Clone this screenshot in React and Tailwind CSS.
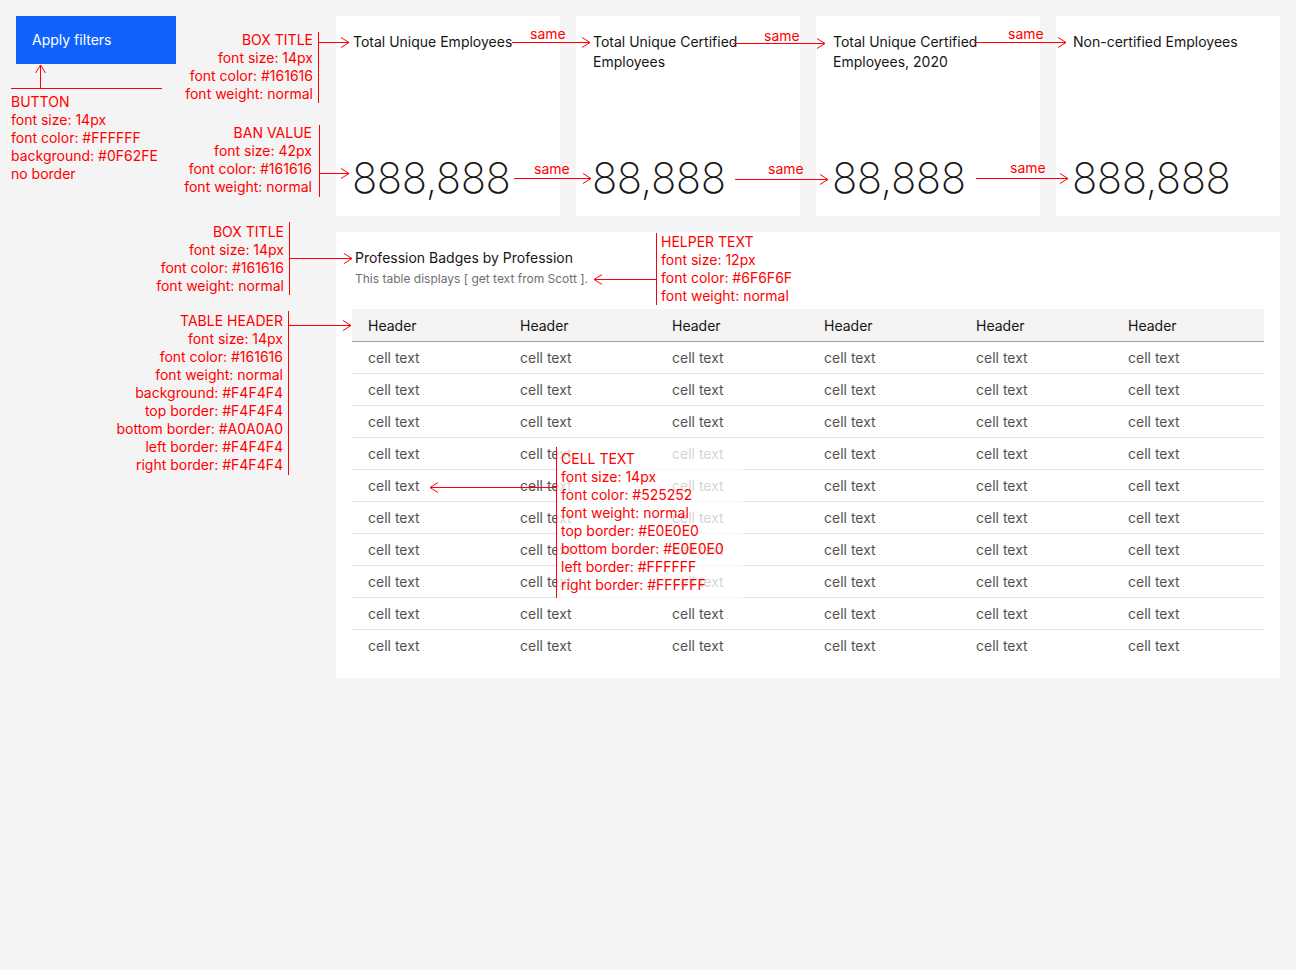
import React from "react";

const cards = [
  { title: "Total Unique Employees", value: "888,888" },
  { title: "Total Unique Certified Employees", value: "88,888" },
  { title: "Total Unique Certified Employees, 2020", value: "88,888" },
  { title: "Non-certified Employees", value: "888,888" },
];

const rows = Array.from({ length: 10 });
const cols = Array.from({ length: 6 });

function Line({ x1, y1, x2, y2 }) {
  return <line x1={x1} y1={y1} x2={x2} y2={y2} stroke="#ff0000" strokeWidth="1" />;
}
function ArrowR({ x, y }) {
  return <polyline points={`${x - 8},${y - 5} ${x},${y} ${x - 8},${y + 5}`} fill="none" stroke="#ff0000" strokeWidth="1" />;
}
function ArrowL({ x, y }) {
  return <polyline points={`${x + 8},${y - 5} ${x},${y} ${x + 8},${y + 5}`} fill="none" stroke="#ff0000" strokeWidth="1" />;
}
function ArrowU({ x, y }) {
  return <polyline points={`${x - 5},${y + 8} ${x},${y} ${x + 5},${y + 8}`} fill="none" stroke="#ff0000" strokeWidth="1" />;
}

function Note({ className, lines }) {
  return (
    <div className={"absolute flex flex-col text-sm leading-[18px] text-[#ff0000] " + className}>
      {lines.map((l, i) => (
        <div key={i}>{l}</div>
      ))}
    </div>
  );
}

export default function App() {
  return (
    <div
      className="relative min-h-screen w-full bg-[#f4f4f4] text-[#161616] overflow-hidden"
      style={{ fontFamily: "Inter, 'Noto Sans', sans-serif" }}
    >
      <div className="flex p-4">
        <div className="w-[320px] shrink-0">
          <button className="flex h-12 w-40 items-center bg-[#0f62fe] pl-4 text-left text-sm text-white">
            Apply filters
          </button>
        </div>
        <div className="flex w-[944px] flex-col gap-4">
          <div className="flex gap-4">
            {cards.map((c, i) => (
              <div key={i} className="flex h-[200px] w-[224px] flex-col justify-between bg-white px-4 pt-4 pb-[13px]">
                <div className="pl-[1px] text-sm leading-5 text-[#161616]">{c.title}</div>
                <div className="text-[42px] font-extralight leading-[50px] tracking-[-0.5px] text-[#161616]">{c.value}</div>
              </div>
            ))}
          </div>
          <div className="bg-white p-4">
            <div className="pl-[3px] text-sm leading-5 text-[#161616]">Profession Badges by Profession</div>
            <div className="mt-[3px] pl-[3px] text-xs leading-4 text-[#6f6f6f]">This table displays [ get text from Scott ].</div>
            <div className="mt-[22px]">
              <div className="grid h-[33px] grid-cols-6 border-b border-[#a0a0a0] bg-[#f4f4f4]">
                {cols.map((_, i) => (
                  <div key={i} className="flex items-center px-4 pt-[1px] text-sm text-[#161616]">Header</div>
                ))}
              </div>
              {rows.map((_, r) => (
                <div
                  key={r}
                  className={r < 9 ? "grid h-8 grid-cols-6 border-b border-[#e0e0e0]" : "grid h-8 grid-cols-6"}
                >
                  {cols.map((_, i) => (
                    <div key={i} className="flex items-center px-4 text-sm text-[#525252]">cell text</div>
                  ))}
                </div>
              ))}
            </div>
          </div>
        </div>
      </div>

      {/* annotation overlay: translucent box behind CELL TEXT */}
      <div className="absolute left-[557px] top-[447px] h-[151px] w-[186px] bg-white/75" />

      <svg className="pointer-events-none absolute left-0 top-0" width="1296" height="970">
        <Line x1={11} y1={88.5} x2={162} y2={88.5} />
        <Line x1={40.5} y1={88} x2={40.5} y2={65} />
        <ArrowU x={40.5} y={65} />
        <Line x1={318.5} y1={32} x2={318.5} y2={103} />
        <Line x1={318} y1={42.5} x2={349} y2={42.5} />
        <ArrowR x={349} y={42.5} />
        <Line x1={319.5} y1={125} x2={319.5} y2={197} />
        <Line x1={319} y1={173.5} x2={349} y2={173.5} />
        <ArrowR x={349} y={173.5} />
        <Line x1={512} y1={42.5} x2={590} y2={42.5} />
        <ArrowR x={590} y={42.5} />
        <Line x1={733} y1={43.5} x2={825} y2={43.5} />
        <ArrowR x={825} y={43.5} />
        <Line x1={974} y1={42.5} x2={1066} y2={42.5} />
        <ArrowR x={1066} y={42.5} />
        <Line x1={514} y1={178.5} x2={591} y2={178.5} />
        <ArrowR x={591} y={178.5} />
        <Line x1={735} y1={179.5} x2={828} y2={179.5} />
        <ArrowR x={828} y={179.5} />
        <Line x1={976} y1={178.5} x2={1068} y2={178.5} />
        <ArrowR x={1068} y={178.5} />
        <Line x1={289.5} y1={222} x2={289.5} y2={295} />
        <Line x1={289} y1={258.5} x2={352} y2={258.5} />
        <ArrowR x={352} y={258.5} />
        <Line x1={288.5} y1={311} x2={288.5} y2={475} />
        <Line x1={288} y1={325.5} x2={351} y2={325.5} />
        <ArrowR x={351} y={325.5} />
        <Line x1={656.5} y1={233} x2={656.5} y2={305} />
        <Line x1={656} y1={279.5} x2={594} y2={279.5} />
        <ArrowL x={594} y={279.5} />
        <Line x1={556.5} y1={447} x2={556.5} y2={598} />
        <Line x1={556} y1={487.5} x2={430} y2={487.5} />
        <ArrowL x={430} y={487.5} />
      </svg>

      <Note className="left-[530px] top-[25px]" lines={["same"]} />
      <Note className="left-[764px] top-[27px]" lines={["same"]} />
      <Note className="left-[1008px] top-[25px]" lines={["same"]} />
      <Note className="left-[534px] top-[160px]" lines={["same"]} />
      <Note className="left-[768px] top-[160px]" lines={["same"]} />
      <Note className="left-[1010px] top-[159px]" lines={["same"]} />

      <Note
        className="left-[11px] top-[93px]"
        lines={["BUTTON", "font size: 14px", "font color: #FFFFFF", "background: #0F62FE", "no border"]}
      />
      <Note
        className="right-[983px] top-[31px] items-end text-right"
        lines={["BOX TITLE", "font size: 14px", "font color: #161616", "font weight: normal"]}
      />
      <Note
        className="right-[984px] top-[124px] items-end text-right"
        lines={["BAN VALUE", "font size: 42px", "font color: #161616", "font weight: normal"]}
      />
      <Note
        className="right-[1012px] top-[223px] items-end text-right"
        lines={["BOX TITLE", "font size: 14px", "font color: #161616", "font weight: normal"]}
      />
      <Note
        className="right-[1013px] top-[312px] items-end text-right"
        lines={[
          "TABLE HEADER",
          "font size: 14px",
          "font color: #161616",
          "font weight: normal",
          "background: #F4F4F4",
          "top border: #F4F4F4",
          "bottom border: #A0A0A0",
          "left border: #F4F4F4",
          "right border: #F4F4F4",
        ]}
      />
      <Note
        className="left-[661px] top-[233px]"
        lines={["HELPER TEXT", "font size: 12px", "font color: #6F6F6F", "font weight: normal"]}
      />
      <Note
        className="left-[561px] top-[450px]"
        lines={[
          "CELL TEXT",
          "font size: 14px",
          "font color: #525252",
          "font weight: normal",
          "top border: #E0E0E0",
          "bottom border: #E0E0E0",
          "left border: #FFFFFF",
          "right border: #FFFFFF",
        ]}
      />
    </div>
  );
}
